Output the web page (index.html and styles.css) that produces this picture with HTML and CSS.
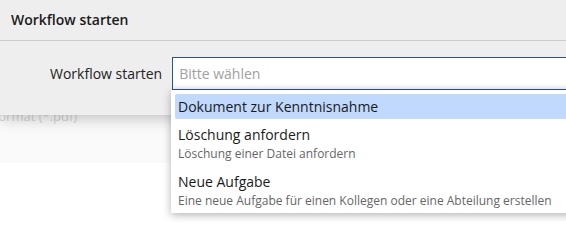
FILE: index.html
```html
<!DOCTYPE html>
<html lang="de">
<head>
    <meta charset="UTF-8">
    <meta name="viewport" content="width=device-width, initial-scale=1.0">
    <title>Workflow starten</title>
    <link rel="stylesheet" href="styles.css">
</head>
<body>
    <div class="page">
        <div class="page-section">
            <div class="page-row"></div>
            <div class="page-row page-hint"><span class="hint-text">Dateiformat (*.pdf)</span></div>
        </div>
    </div>

    <div class="modal">
        <div class="modal-header">Workflow starten</div>
        <div class="modal-body">
            <div class="form-row">
                <label class="form-label" for="workflowSelect">Workflow starten</label>
                <div class="select-wrap">
                    <input type="text" class="select-input" id="workflowSelect" placeholder="Bitte wählen">
                </div>
            </div>
        </div>
    </div>

    <ul class="dropdown">
        <li class="option active">
            <div class="option-title">Dokument zur Kenntnisnahme</div>
        </li>
        <li class="option">
            <div class="option-title">Löschung anfordern</div>
            <div class="option-sub">Löschung einer Datei anfordern</div>
        </li>
        <li class="option">
            <div class="option-title">Neue Aufgabe</div>
            <div class="option-sub">Eine neue Aufgabe für einen Kollegen oder eine Abteilung erstellen</div>
        </li>
    </ul>
</body>
</html>
```

FILE: styles.css
```css
html, body {
    margin: 0;
    padding: 0;
    height: 100%;
    overflow: hidden;
}
body {
    font-family: "Open Sans", Arial, sans-serif;
    font-size: 14px;
    color: #222;
    background-color: #fff;
}
.page-section {
    height: 163px;
    background-color: #fafafa;
}
.page-row {
    height: 106px;
}
.page-hint {
    height: 20px;
    line-height: 20px;
    color: #d4d4d4;
    font-size: 13px;
    white-space: nowrap;
}
.hint-text {
    margin-left: -38px;
}
.modal {
    position: absolute;
    top: 0;
    left: 0;
    right: 0;
    height: 115px;
    background-color: #eeeeee;
    box-shadow: 0 4px 14px rgba(0,0,0,0.22);
}
.modal-header {
    height: 41px;
    line-height: 40px;
    padding: 0 11px;
    font-weight: 600;
    color: #1a1a1a;
    border-bottom: 1px solid #cdcdcd;
    box-sizing: border-box;
}
.modal-body {
    padding: 16px 0 0 50px;
}
.form-row {
    display: flex;
    align-items: center;
    gap: 10px;
}
.form-label {
    color: #222;
    white-space: nowrap;
    flex-shrink: 0;
}
.select-wrap {
    width: 430px;
    flex-shrink: 0;
}
.select-input {
    display: block;
    width: 100%;
    height: 33px;
    box-sizing: border-box;
    border: 1px solid #2553a6;
    border-radius: 0;
    padding: 0 6px;
    font-family: inherit;
    font-size: 14px;
    background-color: #fff;
    box-shadow: inset 0 -4px 4px -2px rgba(0,0,0,0.05);
    outline: none;
}
.select-input::placeholder {
    color: #a0a0a0;
}
.dropdown {
    position: absolute;
    top: 90px;
    left: 171px;
    width: 420px;
    margin: 0;
    padding: 4px 4px 0 4px;
    list-style: none;
    background-color: #fff;
    box-shadow: 0 2px 8px rgba(0,0,0,0.3);
}
.option {
    padding: 5px 3px 4px;
    border-radius: 2px;
}
.option.active {
    padding: 3px 3px;
    background-color: #c0d9fc;
}
.option-title {
    line-height: 21px;
    color: #1a1a1a;
}
.option.active .option-title {
    line-height: 19px;
}
.option-sub {
    font-size: 12px;
    line-height: 17px;
    color: #666;
}
```
